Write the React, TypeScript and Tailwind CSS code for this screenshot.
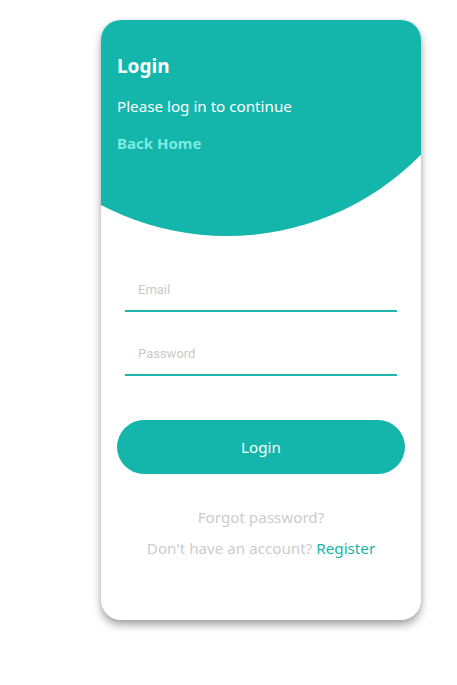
import { useState } from 'react'

export default function App() {
  const [email, setEmail] = useState('')
  const [password, setPassword] = useState('')

  return (
    <div className="min-h-screen bg-white pt-5" style={{ fontFamily: '"Noto Sans", "Open Sans", sans-serif' }}>
      <div className="relative ml-[101px] h-[600px] w-[320px] overflow-hidden rounded-[20px] bg-white shadow-[0_5px_8px_rgba(0,0,0,0.35),0_0_4px_rgba(0,0,0,0.08)]">
        {/* teal header blob */}
        <svg className="absolute left-0 top-0" width="320" height="240" viewBox="0 0 320 240">
          <circle cx="126" cy="-56" r="272" fill="#14b5ab" />
        </svg>

        <div className="relative flex flex-col px-4">
          <div className="pt-8 text-white">
            <h1 className="text-[19px] font-bold leading-7">Login</h1>
            <p className="mt-[14px] text-[15.2px] leading-6">Please log in to continue</p>
            <a href="#" className="mt-[13px] block text-[15px] font-bold leading-6 text-[#7cebe0]">
              Back Home
            </a>
          </div>

          <form className="mt-[113px] flex flex-col px-2" onSubmit={e => e.preventDefault()}>
            <input
              type="email"
              value={email}
              onChange={e => setEmail(e.target.value)}
              placeholder="Email"
              className="block h-[42px] w-full pl-[13px] text-[13px] text-gray-700 outline-none placeholder:text-[#c9c9c9]"
              style={{ fontFamily: 'Roboto, sans-serif' }}
            />
            <div className="h-[2px] w-full bg-[#1bb8ad]" />
            <input
              type="password"
              value={password}
              onChange={e => setPassword(e.target.value)}
              placeholder="Password"
              className="mt-5 block h-[42px] w-full pl-[13px] text-[13px] text-gray-700 outline-none placeholder:text-[#c9c9c9]"
              style={{ fontFamily: 'Roboto, sans-serif' }}
            />
            <div className="h-[2px] w-full bg-[#1bb8ad]" />
          </form>

          <button className="mt-[44px] h-[54px] w-full rounded-full bg-[#14b5ab] text-[15.2px] text-white">
            Login
          </button>

          <div className="mt-[31px] flex flex-col items-center gap-[7px] text-[15.2px] leading-6 text-[#cccccc]">
            <a href="#">Forgot password?</a>
            <p>
              Don't have an account?{' '}
              <a href="#" className="text-[#14b5ab]">
                Register
              </a>
            </p>
          </div>
        </div>
      </div>
    </div>
  )
}
